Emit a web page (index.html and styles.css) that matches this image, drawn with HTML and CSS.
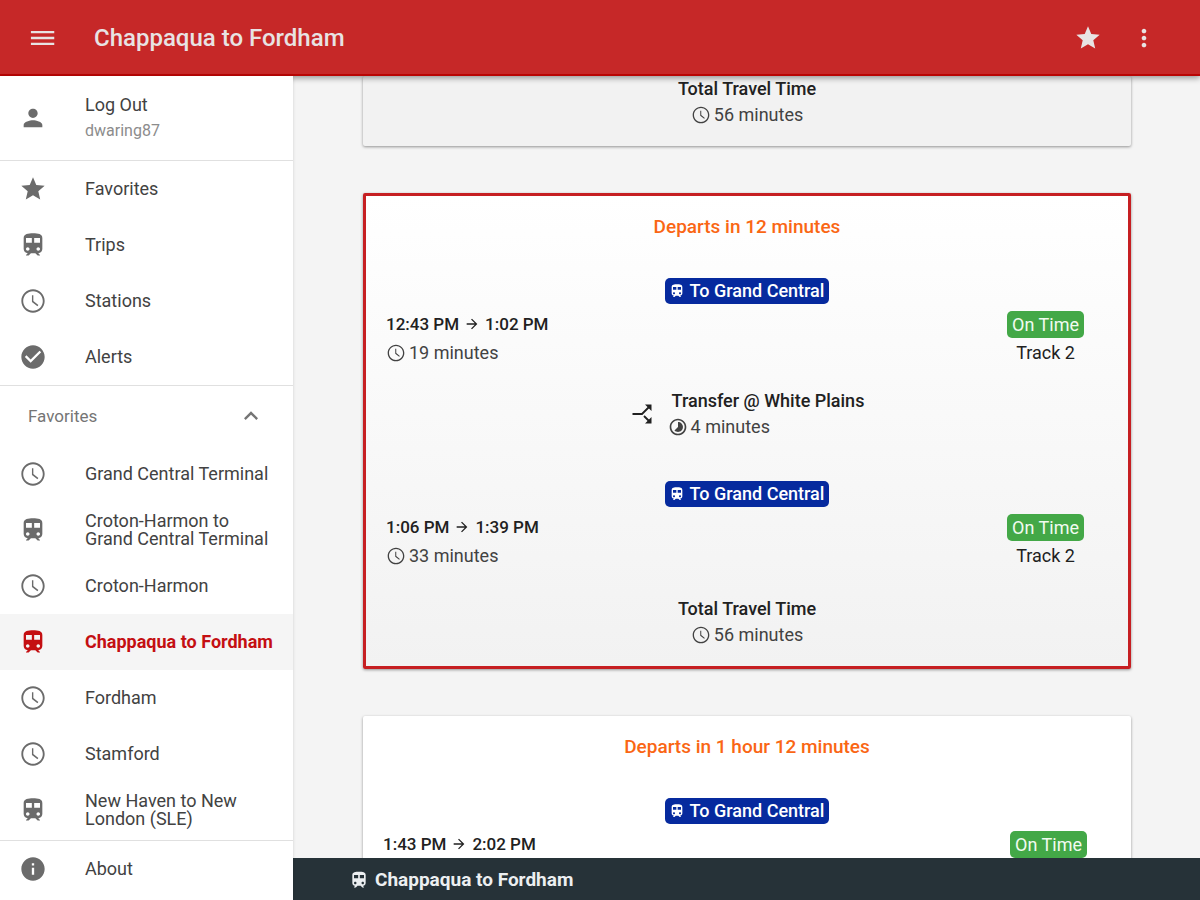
FILE: index.html
```html
<!DOCTYPE html>
<html lang="en">

<head>
    <meta charset="UTF-8">
    <meta name="viewport" content="width=device-width, initial-scale=1.0">
    <title>Chappaqua to Fordham</title>
    <link rel="stylesheet" href="styles.css">
</head>

<body>
    <!-- Icon sprite -->
    <svg class="sprite" aria-hidden="true">
        <symbol id="i-menu" viewBox="0 0 24 24">
            <path d="M2.500 18h20v-2h-20v2zm0-5h20v-2h-20v2zm0-7v2h20V6z" />
        </symbol>
        <symbol id="i-star" viewBox="0 0 24 24">
            <path d="M12 17.27L18.18 21l-1.64-7.03L22 9.24l-7.19-.61L12 2 9.19 8.63 2 9.24l5.46 4.73L5.82 21z" />
        </symbol>
        <symbol id="i-more" viewBox="0 0 24 24">
            <path d="M12 8c1.1 0 2-.9 2-2s-.9-2-2-2-2 .9-2 2 .9 2 2 2zm0 2c-1.1 0-2 .9-2 2s.9 2 2 2 2-.9 2-2-.9-2-2-2zm0 6c-1.1 0-2 .9-2 2s.9 2 2 2 2-.9 2-2-.9-2-2-2z" />
        </symbol>
        <symbol id="i-person" viewBox="0 0 24 24">
            <path d="M12 12c2.21 0 4-1.79 4-4s-1.79-4-4-4-4 1.79-4 4 1.79 4 4 4zm0 2c-2.67 0-8 1.34-8 4v2h16v-2c0-2.66-5.33-4-8-4z" />
        </symbol>
        <symbol id="i-train" viewBox="0 0 24 24">
            <path d="M12 2c-4 0-8 .5-8 4v9.5C4 17.43 5.57 19 7.5 19L6 20.5v.5h2.23l2-2H14l2 2h2v-.5L16.5 19c1.93 0 3.5-1.57 3.5-3.5V6c0-3.5-3.58-4-8-4zM7.5 17c-.83 0-1.5-.67-1.5-1.5S6.67 14 7.5 14s1.5.67 1.5 1.5S8.33 17 7.5 17zm3.5-7H6V6h5v4zm2 0V6h5v4h-5zm3.5 7c-.83 0-1.5-.67-1.5-1.5s.67-1.5 1.5-1.5 1.5.67 1.5 1.5-.67 1.5-1.5 1.5z" />
        </symbol>
        <symbol id="i-clock" viewBox="0 0 24 24">
            <path d="M11.99 2C6.47 2 2 6.48 2 12s4.47 10 9.99 10C17.52 22 22 17.52 22 12S17.52 2 11.99 2zM12 20.4c-4.64 0-8.4-3.76-8.4-8.4S7.36 3.6 12 3.6s8.4 3.76 8.4 8.4-3.76 8.4-8.4 8.4zM12.3 7h-1.2v5.8l4.7 3.7.8-1-4.3-3.400z" />
        </symbol>
        <symbol id="i-check" viewBox="0 0 24 24">
            <path d="M12 2C6.48 2 2 6.48 2 12s4.48 10 10 10 10-4.48 10-10S17.52 2 12 2zm-2 15l-5-5 1.41-1.41L10 14.17l7.59-7.59L19 8l-9 9z" />
        </symbol>
        <symbol id="i-info" viewBox="0 0 24 24">
            <path d="M12 2C6.48 2 2 6.48 2 12s4.48 10 10 10 10-4.48 10-10S17.52 2 12 2zm1 15h-2v-6h2v6zm0-8h-2V7h2v2z" />
        </symbol>
        <symbol id="i-up" viewBox="0 0 24 24">
            <path d="M12 8l-6 6 1.41 1.41L12 10.83l4.59 4.58L18 14z" />
        </symbol>
        <symbol id="i-arrow" viewBox="0 0 24 24">
            <path d="M12 4l-1.41 1.41L16.17 11H4v2h12.17l-5.58 5.59L12 20l8-8z" />
        </symbol>
        <symbol id="i-split" viewBox="0 0 24 24">
            <path d="M2.5 12H12l7-7M14 14l5 5" fill="none" stroke="currentColor" stroke-width="1.8" />
            <path d="M15 2.500h6.500V9zM21.500 15v6.500H15z" />
        </symbol>
        <symbol id="i-timelapse" viewBox="0 0 24 24">
            <path d="M16.24 7.76C15.07 6.59 13.54 6 12 6v6l-4.24 4.24c2.34 2.34 6.14 2.34 8.49 0 2.34-2.34 2.34-6.14-.01-8.48zM12 2C6.48 2 2 6.48 2 12s4.48 10 10 10 10-4.48 10-10S17.52 2 12 2zm0 18c-4.42 0-8-3.58-8-8s3.58-8 8-8 8 3.58 8 8-3.58 8-8 8z" />
        </symbol>
    </svg>

    <header class="toolbar">
        <button type="button" class="icon-btn" aria-label="Menu"><svg class="icon"><use href="#i-menu" /></svg></button>
        <h1 class="toolbar-title">Chappaqua to Fordham</h1>
        <button type="button" class="icon-btn" aria-label="Favorite"><svg class="icon"><use href="#i-star" /></svg></button>
        <button type="button" class="icon-btn" aria-label="More"><svg class="icon"><use href="#i-more" /></svg></button>
    </header>

    <div class="layout">
        <nav class="sidebar">
            <a href="#" class="nav-item nav-user">
                <svg class="icon"><use href="#i-person" /></svg>
                <span class="user-text">Log Out<small>dwaring87</small></span>
            </a>

            <div class="nav-group">
                <a href="#" class="nav-item"><svg class="icon"><use href="#i-star" /></svg><span>Favorites</span></a>
                <a href="#" class="nav-item"><svg class="icon"><use href="#i-train" /></svg><span>Trips</span></a>
                <a href="#" class="nav-item"><svg class="icon"><use href="#i-clock" /></svg><span>Stations</span></a>
                <a href="#" class="nav-item"><svg class="icon"><use href="#i-check" /></svg><span>Alerts</span></a>
            </div>

            <div class="nav-group nav-favorites">
                <button type="button" class="nav-heading">Favorites<svg class="icon"><use href="#i-up" /></svg></button>
                <a href="#" class="nav-item"><svg class="icon"><use href="#i-clock" /></svg><span>Grand Central Terminal</span></a>
                <a href="#" class="nav-item"><svg class="icon"><use href="#i-train" /></svg><span>Croton-Harmon to Grand Central Terminal</span></a>
                <a href="#" class="nav-item"><svg class="icon"><use href="#i-clock" /></svg><span>Croton-Harmon</span></a>
                <a href="#" class="nav-item active"><svg class="icon"><use href="#i-train" /></svg><span>Chappaqua to Fordham</span></a>
                <a href="#" class="nav-item"><svg class="icon"><use href="#i-clock" /></svg><span>Fordham</span></a>
                <a href="#" class="nav-item"><svg class="icon"><use href="#i-clock" /></svg><span>Stamford</span></a>
                <a href="#" class="nav-item"><svg class="icon"><use href="#i-train" /></svg><span>New Haven to New London (SLE)</span></a>
            </div>

            <a href="#" class="nav-item nav-about"><svg class="icon"><use href="#i-info" /></svg><span>About</span></a>
        </nav>

        <div class="content">
            <main class="trips">
                <section class="card card-past">
                    <div class="total">
                        <strong>Total Travel Time</strong>
                        <span class="duration"><svg class="icon-sm"><use href="#i-clock" /></svg>56 minutes</span>
                    </div>
                </section>

                <section class="card card-next">
                    <h2 class="departs">Departs in 12 minutes</h2>
                    <div class="leg">
                        <span class="direction"><svg class="icon-xs"><use href="#i-train" /></svg>To Grand Central</span>
                        <div class="leg-row">
                            <div class="times">
                                <strong>12:43 PM<svg class="icon-xs"><use href="#i-arrow" /></svg>1:02 PM</strong>
                                <span class="duration"><svg class="icon-sm"><use href="#i-clock" /></svg>19 minutes</span>
                            </div>
                            <div class="status">
                                <span class="on-time">On Time</span>
                                <span class="track">Track 2</span>
                            </div>
                        </div>
                    </div>
                    <div class="transfer">
                        <svg class="icon-md"><use href="#i-split" /></svg>
                        <div>
                            <strong>Transfer @ White Plains</strong>
                            <span class="duration"><svg class="icon-sm"><use href="#i-timelapse" /></svg>4 minutes</span>
                        </div>
                    </div>
                    <div class="leg">
                        <span class="direction"><svg class="icon-xs"><use href="#i-train" /></svg>To Grand Central</span>
                        <div class="leg-row">
                            <div class="times">
                                <strong>1:06 PM<svg class="icon-xs"><use href="#i-arrow" /></svg>1:39 PM</strong>
                                <span class="duration"><svg class="icon-sm"><use href="#i-clock" /></svg>33 minutes</span>
                            </div>
                            <div class="status">
                                <span class="on-time">On Time</span>
                                <span class="track">Track 2</span>
                            </div>
                        </div>
                    </div>
                    <div class="total">
                        <strong>Total Travel Time</strong>
                        <span class="duration"><svg class="icon-sm"><use href="#i-clock" /></svg>56 minutes</span>
                    </div>
                </section>

                <section class="card card-later">
                    <h2 class="departs">Departs in 1 hour 12 minutes</h2>
                    <div class="leg">
                        <span class="direction"><svg class="icon-xs"><use href="#i-train" /></svg>To Grand Central</span>
                        <div class="leg-row">
                            <div class="times">
                                <strong>1:43 PM<svg class="icon-xs"><use href="#i-arrow" /></svg>2:02 PM</strong>
                            </div>
                            <div class="status">
                                <span class="on-time">On Time</span>
                            </div>
                        </div>
                    </div>
                </section>
            </main>

            <footer class="trip-bar"><svg class="icon-sm"><use href="#i-train" /></svg>Chappaqua to Fordham</footer>
        </div>
    </div>
</body>

</html>
```

FILE: styles.css
```css
* {
    margin: 0;
    padding: 0;
    box-sizing: border-box;
}

body {
    font-family: Roboto, sans-serif;
    font-size: 18px;
    line-height: 26px;
    color: #212121;
    background: #f4f4f4;
    height: 100vh;
    display: flex;
    flex-direction: column;
    overflow: hidden;
}

a {
    color: inherit;
    text-decoration: none;
}

button {
    font: inherit;
    color: inherit;
    background: none;
    border: none;
    cursor: pointer;
}

svg {
    fill: currentColor;
    flex: none;
}

strong {
    font-weight: 500;
}

.sprite {
    display: none;
}

.icon {
    width: 28px;
    height: 28px;
}

.icon-md {
    width: 24px;
    height: 24px;
}

.icon-sm {
    width: 20px;
    height: 20px;
}

.icon-xs {
    width: 16px;
    height: 16px;
}

/* Toolbar */
.toolbar {
    flex: none;
    height: 76px;
    padding: 2px 42px 0 28px;
    display: flex;
    align-items: center;
    background: #c62828;
    color: #e8e3e3;
    border-bottom: 2px solid #b90504;
    box-shadow: 0 2px 6px rgba(0, 0, 0, 0.4);
    z-index: 1;
}

.toolbar-title {
    flex: 1;
    margin-left: 38px;
    font-size: 24px;
    font-weight: 500;
}

.icon-btn {
    height: 28px;
}

.icon-btn + .icon-btn {
    margin-left: 28px;
}

.layout {
    flex: 1;
    min-height: 0;
    display: flex;
}

/* Sidebar */
.sidebar {
    flex: none;
    width: 293px;
    display: flex;
    flex-direction: column;
    background: #fff;
    box-shadow: 0 0 3px rgba(0, 0, 0, 0.15);
    z-index: 1;
}

.nav-item {
    height: 56px;
    padding: 0 19px;
    display: flex;
    align-items: center;
    gap: 38px;
    line-height: 18px;
    color: #424242;
}

.nav-item .icon {
    color: #6b6b6b;
}

.nav-item.active,
.nav-item.active .icon {
    color: #c40f12;
}

.nav-item.active {
    background: #f5f5f5;
    font-weight: 700;
}

.nav-user {
    flex: none;
    height: 84px;
}

.user-text small {
    display: block;
    margin-top: 8px;
    font-size: 16px;
    color: #8c8c8c;
}

.nav-group {
    border-top: 1px solid #e0e0e0;
}

.nav-favorites {
    flex: 1;
    min-height: 0;
    overflow: hidden;
}

.nav-heading {
    width: 100%;
    height: 60px;
    padding: 0 28px;
    display: flex;
    align-items: center;
    justify-content: space-between;
    font-size: 17px;
    color: #757575;
}

.nav-about {
    flex: none;
    height: 60px;
    padding-bottom: 4px;
    border-top: 1px solid #e0e0e0;
}

/* Trip cards */
.content {
    flex: 1;
    min-width: 0;
    display: flex;
    flex-direction: column;
}

.trips {
    flex: 1;
    min-height: 0;
    padding: 0 69px 0 70px;
    overflow: hidden;
}

.card {
    margin-bottom: 47px;
    padding: 18px 20px;
    display: flex;
    flex-direction: column;
    background: linear-gradient(#fff, #f2f2f2);
    border-radius: 2px;
    box-shadow: 0 1px 3px rgba(0, 0, 0, 0.4);
}

.card-past {
    padding-top: 0;
    background: #f2f2f2;
}

.card-next {
    border: 3px solid #c61f22;
}

.card-later {
    background: #fff;
}

.departs {
    margin-bottom: 38px;
    font-size: 19px;
    font-weight: 500;
    text-align: center;
    color: #fa6614;
}

.leg {
    display: flex;
    flex-direction: column;
    align-items: center;
    gap: 7px;
}

.direction {
    padding: 0 5px 0 4px;
    display: flex;
    align-items: center;
    gap: 5px;
    border-radius: 5px;
    background: #062a9e;
    color: #fff;
    font-weight: 500;
}

.leg-row {
    width: 100%;
    padding-right: 24px;
    display: flex;
    justify-content: space-between;
}

.times strong {
    display: flex;
    align-items: center;
    gap: 5px;
    font-size: 17px;
}

.duration {
    display: flex;
    align-items: center;
    gap: 3px;
    color: #424242;
}

.times .duration {
    margin-top: 3px;
}

.status {
    display: flex;
    flex-direction: column;
    align-items: center;
    gap: 2px;
}

.on-time {
    padding: 0 5px;
    border-radius: 5px;
    line-height: 27px;
    background: #43a847;
    color: #f1fbf1;
}

.transfer {
    margin: 22px 0 41px;
    display: flex;
    justify-content: center;
    align-items: center;
    gap: 14px;
}

.transfer strong {
    margin-left: 4px;
}

.total {
    display: flex;
    flex-direction: column;
    align-items: center;
}

.leg + .total {
    margin-top: 27px;
}

/* Current trip bar */
.trip-bar {
    flex: none;
    height: 42px;
    padding: 2px 56px 0;
    display: flex;
    align-items: center;
    gap: 6px;
    background: #263238;
    color: #eceff1;
    font-size: 19px;
    font-weight: 700;
}
```
